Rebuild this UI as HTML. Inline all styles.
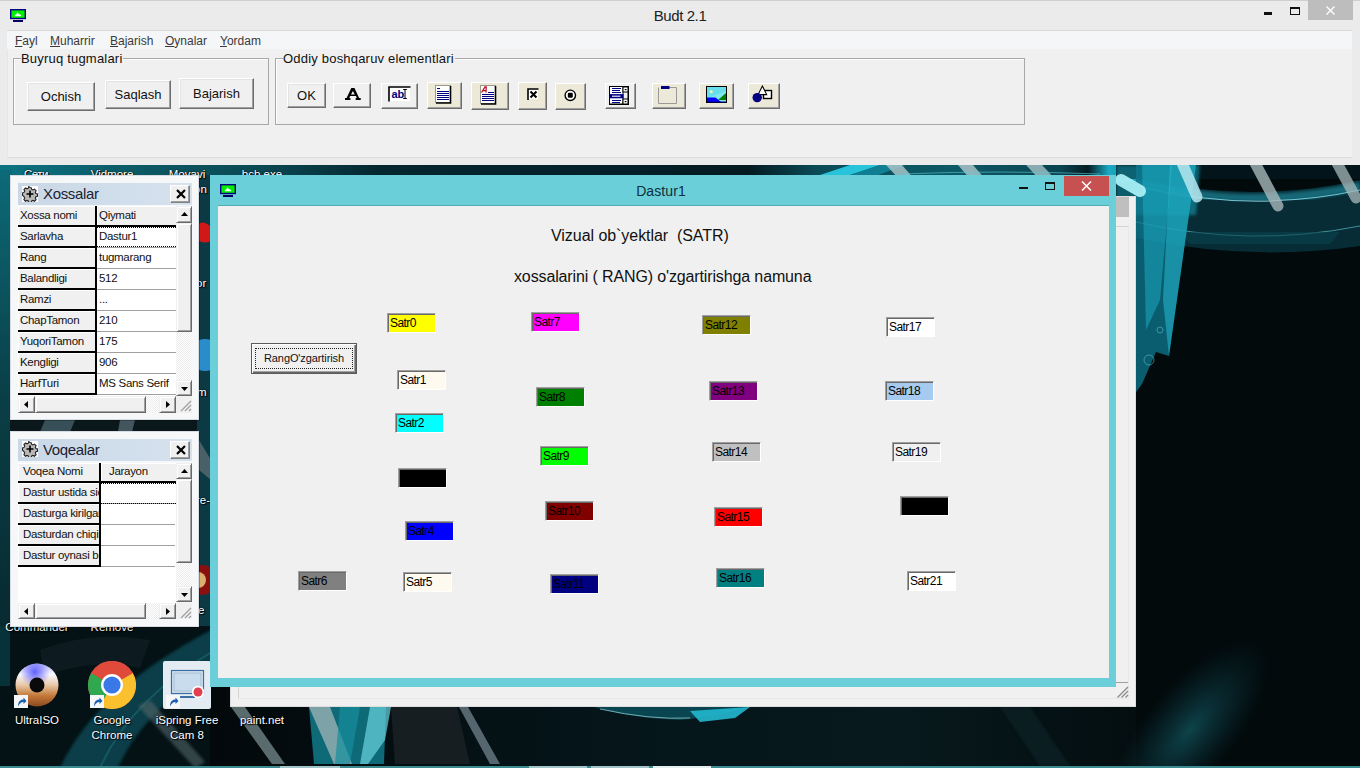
<!DOCTYPE html>
<html><head><meta charset="utf-8">
<style>
*{box-sizing:border-box;margin:0;padding:0}
html,body{width:1360px;height:768px;overflow:hidden}
body{position:relative;background:#03090b;font-family:"Liberation Sans",sans-serif;font-size:12px;color:#000}
.a{position:absolute}
/* desktop */
#deskold{background:
 radial-gradient(ellipse 120px 60px at 1260px 760px,rgba(30,110,120,.35),transparent),
 radial-gradient(ellipse 300px 200px at 520px 740px,rgba(20,90,100,.45),transparent),
 linear-gradient(90deg,#0a3c44 0px,#08323a 10px,#04181c 200px,#03090b 400px,#03090b 100%)}
/* main window */
#main{left:0;top:0;width:1360px;height:165px;background:#ebebeb;box-shadow:inset 0 1px 0 #cfcfcf}
#main .title{left:0;top:1px;width:1360px;height:30px;text-align:center;font-size:15px;line-height:30px;color:#222;letter-spacing:-0.4px}
#menubar{left:7px;top:30px;width:1345px;height:19px;background:#f5f6f7;border-top:1px solid #dadada}
#menubar span{position:absolute;top:3px;font-size:12px;color:#3a3a3a}
#client{left:7px;top:49px;width:1345px;height:109px;background:#f0f0f0;border-bottom:1px solid #dcdcdc;border-left:1px solid #e6e6e6}
.grp{border:1px solid #a8a8a8;box-shadow:1px 1px 0 #fff inset}
.grp .lbl{position:absolute;top:-8px;left:7px;background:#f0f0f0;font-size:13px;line-height:16px;padding-right:1px;color:#111;letter-spacing:0.2px}
.btn{background:#f0f0f0;border:1px solid;border-color:#fff #6d6d6d #6d6d6d #fff;box-shadow:inset -1px -1px 0 #a0a0a0,inset 1px 1px 0 #e3e3e3;text-align:center;font-size:13px;color:#111}
.tb{background:#f0f0f0;border:1px solid;border-color:#fff #6d6d6d #6d6d6d #fff;box-shadow:inset -1px -1px 0 #a0a0a0}
.lab{width:49px;height:20px;border:1px solid;border-color:#a0a0a0 #fff #fff #a0a0a0;box-shadow:inset 1px 1px 0 #696969;font-size:12px;line-height:18px;padding-left:2px;color:#000;letter-spacing:-0.55px}
.pnl{background:#f6f7f9;border:1px solid #d9dde3;box-shadow:1px 1px 0 rgba(0,0,0,.25)}
.ptl{background:linear-gradient(90deg,#c9d7e6,#d6e2ee);font-size:15px;color:#1a2233;letter-spacing:-0.35px}
.xb{background:#f0f0f0;border:1px solid;border-color:#fff #808080 #808080 #fff;box-shadow:inset -1px -1px 0 #a0a0a0}
.hc{background:#f0f0f0;border-right:2px solid #000;border-bottom:2px solid #000;box-shadow:inset 1px 1px 0 #fff;font-size:11.5px;line-height:19px;padding-left:2px;white-space:nowrap;overflow:hidden;color:#111;letter-spacing:-0.3px}
.vc{background:#fff;border-bottom:1px solid #a0a0a0;font-size:11.5px;line-height:19px;padding-left:2px;white-space:nowrap;overflow:hidden;color:#111;letter-spacing:-0.3px}
.sb{background:#f0f0f0;border:1px solid;border-color:#f0f0f0 #696969 #696969 #f0f0f0;box-shadow:inset 1px 1px 0 #fff,inset -1px -1px 0 #a0a0a0}
.trk{background:repeating-conic-gradient(#fff 0 25%,#ececec 0 50%) 0 0/2px 2px}
.dl{position:absolute;color:#fff;font-size:11.5px;line-height:15px;text-align:center;text-shadow:0 0 2px #000,1px 1px 1px #000;white-space:nowrap}
</style></head><body>
<svg id="desk" class="a" style="left:0;top:0" width="1360" height="768" viewBox="0 0 1360 768">
<defs>
 <linearGradient id="gtop" x1="0" y1="0" x2="1" y2="0"><stop offset="0" stop-color="#0c7282"/><stop offset=".1" stop-color="#0b5a66"/><stop offset=".2" stop-color="#0a4650"/><stop offset=".28" stop-color="#04262e"/><stop offset=".45" stop-color="#03202a"/><stop offset=".55" stop-color="#041a20"/><stop offset=".6" stop-color="#0a4a56"/><stop offset=".7" stop-color="#0c5a66"/><stop offset=".78" stop-color="#0a4450"/><stop offset=".8" stop-color="#041c22"/><stop offset=".815" stop-color="#1aa8c0"/><stop offset="1" stop-color="#0a4a56"/></linearGradient>
 <linearGradient id="gleft" x1="0" y1="0" x2="0" y2="1"><stop offset="0" stop-color="#0c6a78"/><stop offset=".5" stop-color="#0a3e46"/><stop offset="1" stop-color="#072a30"/></linearGradient>
 <linearGradient id="grib" x1="0" y1="0" x2="0" y2="1"><stop offset="0" stop-color="#30d8ee"/><stop offset=".5" stop-color="#1ab0c8"/><stop offset="1" stop-color="#0e7e92"/></linearGradient>
 <linearGradient id="gbr" x1="0" y1="0" x2="1" y2="0"><stop offset="0" stop-color="#03090b"/><stop offset=".35" stop-color="#05151a"/><stop offset=".6" stop-color="#07191d"/><stop offset=".8" stop-color="#040e10"/><stop offset="1" stop-color="#020a0c"/></linearGradient>
 <filter id="bl"><feGaussianBlur stdDeviation="1.5"/></filter>
 <filter id="bl6" x="-50%" y="-50%" width="200%" height="200%"><feGaussianBlur stdDeviation="8"/></filter>
 <radialGradient id="rglow"><stop offset="0" stop-color="#0f4a52" stop-opacity=".9"/><stop offset=".5" stop-color="#0c3a42" stop-opacity=".5"/><stop offset="1" stop-color="#0a3038" stop-opacity="0"/></radialGradient>
</defs>
<rect width="1360" height="768" fill="#020a0c"/>
<!-- top strip -->
<rect x="0" y="160" width="1360" height="22" fill="url(#gtop)"/>
<path d="M805 180 L850 165 L880 165 L835 180z" fill="#2ad0e8" opacity=".9"/><path d="M835 180 L880 165 L905 165 L865 180z" fill="#118aa0" opacity=".8"/>
<path d="M886 165 L902 165 L915 180 L900 180z" fill="#a8c4c8" opacity=".85"/>
<path d="M958 165 L973 165 L986 180 L971 180z" fill="#a8c4c8" opacity=".85"/>
<path d="M1026 165 L1042 165 L1056 180 L1040 180z" fill="#a8c4c8" opacity=".8"/>
<path d="M900 174 Q1000 170 1100 174" stroke="#5ec8d8" stroke-width="1" fill="none" opacity=".6"/>
<!-- left edge -->
<rect x="0" y="170" width="12" height="460" fill="url(#gleft)"/>
<!-- gap between panels -->
<rect x="10" y="418" width="190" height="14" fill="#0a181c"/>
<path d="M45 420 L75 420 L70 432 L40 432z" fill="#4a6670" opacity=".7"/><path d="M120 420 L135 420 L132 432 L118 432z" fill="#6a8088" opacity=".6"/>
<!-- strip between panels and Dastur1 -->
<rect x="197" y="175" width="14" height="460" fill="#0b3a44"/>
<path d="M197 225 q6 -6 14 2 l0 14 q-8 4 -14 -2z" fill="#d01818"/>
<circle cx="205" cy="355" r="16" fill="#2b8ccc"/>
<path d="M199 440 L211 460 L211 480 L199 470z" fill="#5a6a70" opacity=".8"/>
<circle cx="202" cy="580" r="15" fill="#8a1010"/><circle cx="198" cy="580" r="8" fill="#d8b070"/>
<!-- bottom-left region -->
<rect x="0" y="626" width="212" height="142" fill="#041215"/>
<rect x="0" y="626" width="10" height="60" fill="#08323a"/>
<path d="M60 768 Q95 690 215 628 L215 665 Q140 715 118 768z" fill="#0b4a54" opacity=".8" filter="url(#bl)"/>
<path d="M100 768 Q130 700 215 650" stroke="#1a6a74" stroke-width="2" fill="none" opacity=".6"/>
<path d="M138 706 L150 700 L205 762 L195 768z" fill="#52666a" opacity=".6" filter="url(#bl)"/>
<path d="M40 650 Q90 630 150 640 L140 668 Q90 658 45 676z" fill="#0e1c20" opacity=".9"/>
<!-- bottom band -->
<rect x="210" y="687" width="1150" height="81" fill="url(#gbr)"/>
<path d="M231 707 L245 707 L285 764 L272 764z" fill="#6a7c80" opacity=".85"/>
<path d="M309 707 L386 707 L384 764 L314 764z" fill="#0e6a76"/>
<path d="M309 707 L330 707 L352 764 L334 764z" fill="#9ab0b4" opacity=".8"/>
<path d="M340 707 L360 707 L350 764 L335 764z" fill="#168e9c" opacity=".7"/>
<path d="M370 707 L391 707 L385 740 L368 764 L360 764z" fill="#6ad4e0" opacity=".7"/>
<path d="M391 707 L457 707 L470 764 L395 764z" fill="#161e22"/>
<path d="M459 707 L468 707 L500 764 L490 764z" fill="#6a7c84" opacity=".8"/>
<path d="M594 707 L750 707 Q720 716 680 720 Q630 718 594 707z" fill="#0a4a56" opacity=".9"/><path d="M600 709 Q650 720 690 718" stroke="#9ad8e0" stroke-width="1" fill="none" opacity=".7"/>
<path d="M690 711 L750 707 L735 718 L700 722z" fill="#22b8d0" opacity=".9"/>
<path d="M1000 707 L1030 707 L1070 766 L1040 766z" fill="#0e2226" opacity=".7" filter="url(#bl)"/>
<!-- right region -->
<rect x="1136" y="165" width="224" height="603" fill="#020a0c"/>
<rect x="1116" y="165" width="244" height="14" fill="#03141a"/>
<path d="M1136 178 Q1250 205 1360 180 L1360 246 Q1250 262 1136 238z" fill="#072e38" opacity=".95"/>
<path d="M1136 182 Q1250 212 1360 186" stroke="#2ab0c8" stroke-width="8" fill="none" opacity=".45" filter="url(#bl)"/>
<path d="M1136 186 Q1250 214 1360 190" stroke="#8ae4f0" stroke-width="1.2" fill="none" opacity=".8"/>
<path d="M1136 222 Q1250 248 1360 226" stroke="#6ad0de" stroke-width="1" fill="none" opacity=".6"/>
<path d="M1190 244 L1330 244 L1340 232 L1180 232z" fill="#0a4450" opacity=".6"/>
<path d="M1116 165 L1200 165 L1196 215 L1116 215z" fill="#14a0b8" opacity=".55" filter="url(#bl)"/>
<path d="M1136 165 L1196 165 L1169 356 L1156 352 L1142 384 L1136 392z" fill="#0e7a90" opacity=".75"/>
<path d="M1142 165 L1172 165 L1160 300 L1146 330z" fill="#20b8d0" opacity=".45"/>
<path d="M1170 165 L1196 165 L1169 356 L1163 300z" fill="#28c4dc" opacity=".5"/>
<circle cx="1149" cy="360" r="5" fill="none" stroke="#5ab8c8" opacity=".6"/>
<circle cx="1160" cy="330" r="3" fill="none" stroke="#5ab8c8" opacity=".6"/>
<path d="M1182 163 L1197 197" stroke="#b8e8ee" stroke-width="11" stroke-linecap="round" fill="none" opacity=".85"/>
<path d="M1255 163 L1278 206" stroke="#a8b8ba" stroke-width="11" stroke-linecap="round" fill="none" opacity=".8"/>
<path d="M1337 163 L1356 198" stroke="#a8b8ba" stroke-width="11" stroke-linecap="round" fill="none" opacity=".75"/>
<path d="M1121 180 L1140 191" stroke="#a8eef4" stroke-width="12" stroke-linecap="round" fill="none" opacity=".95"/>
<ellipse cx="1190" cy="730" rx="45" ry="110" transform="rotate(40 1190 730)" fill="url(#rglow)"/>
<!-- taskbar edge -->
<rect x="0" y="766" width="1360" height="2" fill="#3a8a90"/>
<rect x="280" y="766" width="60" height="2" fill="#a0c4c8"/>
<rect x="529" y="766" width="58" height="2" fill="#a0c4c8"/>
<rect x="591" y="766" width="58" height="2" fill="#a0c4c8"/>
<rect x="653" y="766" width="58" height="2" fill="#e4eeee"/>
</svg>


<!-- desktop icons -->
<svg class="a" style="left:15px;top:663px" width="44" height="44" viewBox="0 0 44 44">
 <defs><linearGradient id="udisc" x1="0" y1="0" x2="0" y2="1"><stop offset="0" stop-color="#b8b8f8"/><stop offset=".25" stop-color="#f8f8ff"/><stop offset=".5" stop-color="#e8c8a8"/><stop offset=".75" stop-color="#c47838"/><stop offset="1" stop-color="#8a4a20"/></linearGradient>
 <radialGradient id="uglow" cx=".45" cy=".2" r=".35"><stop offset="0" stop-color="#6060ff"/><stop offset="1" stop-color="#6060ff" stop-opacity="0"/></radialGradient></defs>
 <circle cx="22" cy="22" r="21.5" fill="url(#udisc)"/><circle cx="22" cy="22" r="21.5" fill="url(#uglow)"/><circle cx="22" cy="22" r="7.5" fill="#0a0a0a"/>
</svg>
<svg class="a" style="left:14px;top:695px" width="14" height="13" viewBox="0 0 14 13"><rect width="14" height="13" fill="#f4f6f8"/><path d="M4 11.5C4 7 6 4.5 9.5 4.5V2.5L12.5 6 9.5 9V7C7 7 5.5 8.5 4 11.5z" fill="#1d5fb0"/></svg>
<svg class="a" style="left:88px;top:661px" width="48" height="48" viewBox="0 0 48 48">
 <circle cx="24" cy="24" r="24" fill="#e04a3a"/>
 <path d="M24 24L3.2 12A24 24 0 0 0 12 44.8z" fill="#2fa84f"/>
 <path d="M24 24L44.8 12A24 24 0 0 1 12 44.8z" fill="#fbc02d"/>
 <path d="M24 24L3.2 12A24 24 0 0 1 44.8 12z" fill="#e04a3a"/>
 <circle cx="24" cy="24" r="11" fill="#fff"/><circle cx="24" cy="24" r="8.6" fill="#3b78e7"/>
</svg>
<svg class="a" style="left:90px;top:695px" width="14" height="13" viewBox="0 0 14 13"><rect width="14" height="13" fill="#f4f6f8"/><path d="M4 11.5C4 7 6 4.5 9.5 4.5V2.5L12.5 6 9.5 9V7C7 7 5.5 8.5 4 11.5z" fill="#1d5fb0"/></svg>
<div class="a" style="left:163px;top:661px;width:48px;height:48px;background:#e3ebf3;border-radius:2px"></div>
<svg class="a" style="left:163px;top:661px" width="48" height="48" viewBox="0 0 48 48">
 <rect x="8.5" y="9.5" width="32" height="23" fill="#d4e2ef" stroke="#3a6ea5" stroke-width="1.2"/><rect x="11" y="12" width="27" height="18" fill="#c8dcee" stroke="#8ab" stroke-width=".6"/>
 <path d="M14 36h18" stroke="#3a6ea5" stroke-width="2"/><circle cx="35" cy="31" r="6.2" fill="#fff"/><circle cx="35" cy="31" r="4.5" fill="#e04050"/>
</svg>
<svg class="a" style="left:166px;top:695px" width="14" height="13" viewBox="0 0 14 13"><rect width="14" height="13" fill="#f4f6f8"/><path d="M4 11.5C4 7 6 4.5 9.5 4.5V2.5L12.5 6 9.5 9V7C7 7 5.5 8.5 4 11.5z" fill="#1d5fb0"/></svg>
<div class="dl" style="left:0px;top:620px;width:74px">Commander</div>
<div class="dl" style="left:74px;top:620px;width:76px">Remove</div>
<div class="dl" style="left:0px;top:713px;width:74px">UltraISO</div>
<div class="dl" style="left:74px;top:713px;width:76px">Google<br>Chrome</div>
<div class="dl" style="left:148px;top:713px;width:78px">iSpring Free<br>Cam 8</div>
<div class="dl" style="left:224px;top:713px;width:76px">paint.net</div>
<div class="dl" style="left:1px;top:167px;width:70px;letter-spacing:-0.5px">Сети</div>
<div class="dl" style="left:74px;top:167px;width:76px">Vidmore</div>
<div class="dl" style="left:148px;top:167px;width:78px">Movavi</div>
<div class="dl" style="left:224px;top:167px;width:76px">bcb.exe</div>
<div class="dl" style="left:194px;top:182px;width:20px;text-align:left">on</div>
<div class="dl" style="left:196px;top:276px;width:20px;text-align:left">or</div>
<div class="dl" style="left:197px;top:385px;width:20px;text-align:left">m</div>
<div class="dl" style="left:196px;top:493px;width:20px;text-align:left">re-</div>
<div class="dl" style="left:198px;top:603px;width:20px;text-align:left">e</div>

<!-- main window -->
<div id="main" class="a">
  <div class="a" style="left:10px;top:9px;width:16px;height:13px"><svg width="16" height="13" viewBox="0 0 16 13"><rect x="0.7" y="0.7" width="14.6" height="8.8" fill="#00ee00" stroke="#000080" stroke-width="1.4"/><path d="M4.8 7.3V6.3l1.4-1 1.3-2 1.3 1.8 1 .2 1.4 1v1z" fill="#efffef"/><rect x="3" y="11" width="10" height="2" fill="#000060"/></svg></div>
  <div class="title a">Budt 2.1</div>
  <div class="a" style="left:1264px;top:12px;width:8px;height:3px;background:#111"></div>
  <div class="a" style="left:1290px;top:7px;width:10px;height:8px;border:1px solid #111;border-top-width:2px"></div>
  <div class="a" style="left:1308px;top:0px;width:45px;height:20px;background:#bdbdbd"><svg class="a" style="left:18px;top:6px" width="9" height="9" viewBox="0 0 9 9"><path d="M.5.5l8 8M8.5.5l-8 8" stroke="#fff" stroke-width="1.4"/></svg></div>
  <div id="menubar" class="a">
    <span style="left:8px"><u>F</u>ayl</span>
    <span style="left:43px"><u>M</u>uharrir</span>
    <span style="left:103px"><u>B</u>ajarish</span>
    <span style="left:158px"><u>O</u>ynalar</span>
    <span style="left:213px"><u>Y</u>ordam</span>
  </div>
  <div id="client" class="a"></div>
  <div class="grp a" style="left:13px;top:58px;width:256px;height:67px"><div class="lbl">Buyruq tugmalari</div></div>
  <div class="btn a" style="left:27px;top:82px;width:68px;height:29px;line-height:27px">Ochish</div>
  <div class="btn a" style="left:105px;top:80px;width:66px;height:29px;line-height:27px">Saqlash</div>
  <div class="btn a" style="left:179px;top:78px;width:75px;height:31px;line-height:29px">Bajarish</div>
  <div class="grp a" style="left:275px;top:58px;width:750px;height:67px"><div class="lbl">Oddiy boshqaruv elementlari</div></div>

  <div class="btn a" style="left:287px;top:83px;width:39px;height:25px;line-height:23px;font-size:13px;color:#111">OK</div>
  <div class="tb a" style="left:333px;top:83px;width:38px;height:25px"></div>
  <svg class="a" style="left:345px;top:88px" width="16" height="12" viewBox="0 0 16 12"><path d="M6.3 0h3.2l4.6 10h1.6v2h-5v-2h1.1l-.8-1.9H5.1l-.8 1.9h1.1v2H0v-2h1.6zM7.9 3L6 6.4h3.7z" fill="#000"/></svg>
  <div class="tb a" style="left:381px;top:83px;width:37px;height:26px"></div>
  <svg class="a" style="left:388px;top:86px" width="23" height="16" viewBox="0 0 23 16"><rect x="1" y="1" width="21" height="14" fill="#fff"/><path d="M1 15.5V1H22.5" stroke="#000" stroke-width="1.6" fill="none"/><text x="3.6" y="11.8" font-family="Liberation Sans" font-weight="bold" font-size="11" fill="#000080" letter-spacing="-0.3">ab</text><path d="M15.2 3.5h3.6M17 3.5v9M15.2 12.5h3.6" stroke="#000" stroke-width="1" fill="none"/></svg>
  <div class="tb a" style="left:427px;top:82px;width:35px;height:27px;background:#ece9d8"></div>
  <svg class="a" style="left:435px;top:85px" width="17" height="19" viewBox="0 0 17 19"><rect x="0.5" y="0.5" width="15" height="17" fill="#fff" stroke="#9a9a8a"/><path d="M15.5 1v17H1" stroke="#000" stroke-width="1.6" fill="none"/><path d="M2 3.5h3M2 6.5h12M2 8.5h12M2 10.5h12M2 12.5h12M2 14.5h12" stroke="#000080" stroke-width="1.1"/></svg>
  <div class="tb a" style="left:471px;top:82px;width:38px;height:28px;background:#ece9d8"></div>
  <svg class="a" style="left:480px;top:85px" width="17" height="20" viewBox="0 0 17 20"><rect x="0.5" y="0.5" width="15" height="18" fill="#fff" stroke="#9a9a8a"/><path d="M15.5 1v18H1" stroke="#000" stroke-width="1.6" fill="none"/><path d="M1.5 7.5L5 2h1.2l-.2 5.5M2.8 5.6h3.4" stroke="#c01020" stroke-width="1.3" fill="none"/><path d="M8 7.5h6M2 9.5h12M2 11.5h12M2 13.5h12M2 15.5h12" stroke="#000080" stroke-width="1.1"/></svg>
  <div class="tb a" style="left:518px;top:82px;width:29px;height:28px;background:#ece9d8"></div>
  <svg class="a" style="left:527px;top:88px" width="12" height="12" viewBox="0 0 12 12"><rect x="1" y="1" width="10" height="10" fill="#fff"/><path d="M1 12V1h10.5" stroke="#000" stroke-width="1.6" fill="none"/><path d="M3.5 3.5l6 6M9.5 3.5l-6 6" stroke="#000" stroke-width="2.1"/></svg>
  <div class="tb a" style="left:555px;top:83px;width:31px;height:27px;background:#ece9d8"></div>
  <svg class="a" style="left:564px;top:89px" width="13" height="13" viewBox="0 0 13 13"><circle cx="6.3" cy="6.3" r="5.2" fill="#fff" stroke="#000" stroke-width="1.4"/><rect x="3.8" y="3.8" width="5" height="5" rx="1.2" fill="#000"/></svg>
  <div class="tb a" style="left:605px;top:83px;width:31px;height:26px"></div>
  <svg class="a" style="left:609px;top:86px" width="20" height="19" viewBox="0 0 20 19"><rect x="0.5" y="0.5" width="19" height="18" fill="#fff" stroke="#000"/><path d="M1 18.2H19.5V0.5" stroke="#000" stroke-width="1.4" fill="none"/><rect x="14" y="1" width="5" height="17" fill="#f0f0f0" stroke="#000"/><rect x="14" y="1" width="5" height="5" fill="#fff" stroke="#000"/><rect x="14" y="13" width="5" height="5" fill="#fff" stroke="#000"/><rect x="15.7" y="3" width="1.8" height="1.2" fill="#000"/><rect x="15.7" y="15" width="1.8" height="1.2" fill="#000"/><path d="M3 2.5h9M3 4.5h8M3 6.5h9M3 14.5h9M3 16.5h8" stroke="#000080" stroke-width="1.1"/><path d="M0.5 10.2h14" stroke="#000080" stroke-width="4.2"/><path d="M3 10.2h8.5" stroke="#fff" stroke-width="1.1"/></svg>
  <div class="tb a" style="left:652px;top:83px;width:34px;height:26px;background:#ece9d8"></div>
  <svg class="a" style="left:657px;top:85px" width="21" height="20" viewBox="0 0 21 20"><path d="M12 2.5H19.5V18.5H1.5V2.5" stroke="#9a9a9a" fill="none"/><rect x="4" y="1" width="8.5" height="3" fill="#000080"/></svg>
  <div class="tb a" style="left:699px;top:83px;width:35px;height:26px;background:#ece9d8"></div>
  <svg class="a" style="left:706px;top:86px" width="22" height="18" viewBox="0 0 22 18"><rect x="0" y="0" width="21" height="17" fill="#000"/><rect x="1" y="1" width="19" height="15" fill="#80e8f0"/><path d="M1 1h19v4L1 12z" fill="#50d8e8" opacity=".5"/><path d="M4.5 4l2.5 1.5-1 2-2.5-1.5z" fill="#f8f8c0"/><path d="M12 14L20 7v7z" fill="#008000"/><path d="M1 11.5h8.5l5.5 4.5H1z" fill="#0000ff"/><path d="M1 16h19" stroke="#000080"/></svg>
  <div class="tb a" style="left:748px;top:83px;width:32px;height:26px;background:#ece9d8"></div>
  <svg class="a" style="left:752px;top:85px" width="22" height="21" viewBox="0 0 22 21"><rect x="11.5" y="5.5" width="8" height="8" fill="#fff" stroke="#000" stroke-width="1.4"/><path d="M10.4 1l4.3 8.6H6.1z" fill="#fff" stroke="#000" stroke-width="1.1"/><circle cx="5.2" cy="12.6" r="4.7" fill="#000080"/></svg>
</div>
<!-- behind window -->
<div class="a" style="left:230px;top:196px;width:906px;height:511px;background:#f0f0f0;border:1px solid #dcdcdc">
  <div class="a" style="left:885px;top:0px;width:13px;height:20px;background:#bfbfbf"></div>
  <div class="a" style="left:7px;top:29px;width:891px;height:473px;border:1px solid #d4d4d4;border-right-color:#e8e8e8;border-bottom-color:#e8e8e8"></div>
  <svg class="a" style="left:885px;top:489px" width="13" height="13" viewBox="0 0 13 13"><path d="M12 1L1.5 11.5M12 5L5.5 11.5M12 9L9.5 11.5" stroke="#8a8a8a" stroke-width="1.3"/></svg><div class="a" style="left:885px;top:485px;width:12px;height:1px;background:#a0a0a0"></div>
</div>
<!-- Dastur1 window -->
<div id="dw" class="a" style="left:210px;top:175px;width:906px;height:512px;background:#6acfd9">
  <div class="a" style="left:10px;top:9px;width:16px;height:13px"><svg width="16" height="13" viewBox="0 0 16 13"><rect x="0.7" y="0.7" width="14.6" height="8.8" fill="#00ee00" stroke="#000080" stroke-width="1.4"/><path d="M4.8 7.3V6.3l1.4-1 1.3-2 1.3 1.8 1 .2 1.4 1v1z" fill="#efffef"/><rect x="3" y="11" width="10" height="2" fill="#000060"/></svg></div>
  <div class="a" style="left:-2px;top:1px;width:906px;height:30px;text-align:center;line-height:30px;font-size:14px;color:#10303a;letter-spacing:0.1px">Dastur1</div>
  <div class="a" style="left:809px;top:12px;width:9px;height:2px;background:#111"></div>
  <div class="a" style="left:835px;top:7px;width:10px;height:8px;border:1px solid #111;border-top-width:2px"></div>
  <div class="a" style="left:854px;top:1px;width:45px;height:20px;background:#c75050"><svg class="a" style="left:17px;top:5px" width="11" height="10" viewBox="0 0 11 10"><path d="M1 0.5l9 9M10 0.5l-9 9" stroke="#fff" stroke-width="1.5"/></svg></div>
  <div class="a" style="left:8px;top:30px;width:891px;height:1px;background:#58aab2"></div>
  <div id="form" class="a" style="left:8px;top:31px;width:891px;height:472px;background:#f0f0f0">
    <div class="a" style="left:333px;top:21px;font-size:16px;line-height:18px;color:#111;letter-spacing:-0.05px">Vizual ob`yektlar &nbsp;(SATR)</div>
    <div class="a" style="left:296px;top:62px;font-size:16px;line-height:18px;color:#111;letter-spacing:-0.13px">xossalarini ( RANG) o'zgartirishga namuna</div>
  </div>
</div>
<div class="a" style="left:251px;top:343px;width:106px;height:31px;background:#f0f0f0;border:1px solid #5a5a5a;box-shadow:inset 1px 1px 0 #fff,inset -1px -1px 0 #696969,inset -2px -2px 0 #a0a0a0;font-size:11px;text-align:center;line-height:29px;letter-spacing:-0.1px;color:#111">
  <div class="a" style="left:3px;top:4px;width:98px;height:21px;border:1px dotted #222"></div>RangO'zgartirish</div>
<div class="lab a" style="left:387px;top:313px;background:#ffff00">Satr0</div><div class="lab a" style="left:531px;top:312px;background:#ff00ff">Satr7</div><div class="lab a" style="left:397px;top:370px;background:#fffaf0">Satr1</div><div class="lab a" style="left:536px;top:387px;background:#008000">Satr8</div><div class="lab a" style="left:395px;top:413px;background:#00ffff">Satr2</div><div class="lab a" style="left:540px;top:446px;background:#00ff00">Satr9</div><div class="lab a" style="left:398px;top:468px;background:#000000"></div><div class="lab a" style="left:545px;top:501px;background:#800000">Satr10</div><div class="lab a" style="left:405px;top:521px;background:#0000ff">Satr4</div><div class="lab a" style="left:298px;top:571px;background:#808080">Satr6</div><div class="lab a" style="left:403px;top:572px;background:#fffaf0">Satr5</div><div class="lab a" style="left:550px;top:574px;background:#000080">Satr11</div><div class="lab a" style="left:702px;top:315px;background:#808000">Satr12</div><div class="lab a" style="left:886px;top:317px;background:#ffffff">Satr17</div><div class="lab a" style="left:709px;top:381px;background:#800080">Satr13</div><div class="lab a" style="left:885px;top:381px;background:#a6caf0">Satr18</div><div class="lab a" style="left:712px;top:442px;background:#c0c0c0">Satr14</div><div class="lab a" style="left:892px;top:442px;background:#f0f0f0">Satr19</div><div class="lab a" style="left:714px;top:507px;background:#ff0000">Satr15</div><div class="lab a" style="left:900px;top:496px;background:#000000"></div><div class="lab a" style="left:716px;top:568px;background:#008080">Satr16</div><div class="lab a" style="left:907px;top:571px;background:#ffffff">Satr21</div>

<!-- panels -->
<div class="pnl a" style="left:10px;top:175px;width:189px;height:245px"><div class="ptl a" style="left:7px;top:7px;width:174px;height:22px;line-height:22px;padding-left:25px">Xossalar<svg class="a" style="left:4px;top:3px" width="16" height="16" viewBox="0 0 16 16"><rect width="16" height="16" fill="#fff"/><path d="M8 1.5l1.2.2.5 1.6 1.3.6 1.5-.8 1.6 1.6-.8 1.5.6 1.3 1.6.5v2.3l-1.6.5-.6 1.3.8 1.5-1.6 1.6-1.5-.8-1.3.6-.5 1.6H6.8l-.5-1.6-1.3-.6-1.5.8-1.6-1.6.8-1.5-.6-1.3L.5 9.2V6.9l1.6-.5.6-1.3-.8-1.5 1.6-1.6 1.5.8 1.3-.6.5-1.6z" fill="#b8b8b8" stroke="#222" stroke-width="1.1"/><path d="M8 4.5v7M4.5 8h7" stroke="#000" stroke-width="1.6"/></svg><div class="xb a" style="left:152px;top:2px;width:20px;height:18px"><svg class="a" style="left:5px;top:3px" width="10" height="10" viewBox="0 0 10 10"><path d="M1 1l8 8M9 1l-8 8" stroke="#000" stroke-width="2.2"/></svg></div></div><div class="a" style="left:7px;top:30px;width:158px;height:190px;background:#fff;overflow:hidden"><div class="hc a" style="left:0;top:0;width:79px;height:21px">Xossa nomi</div><div class="hc a" style="left:79px;top:0;width:79px;height:21px;border-right:0">Qiymati</div><div class="hc a" style="left:0;top:21px;width:79px;height:21px">Sarlavha</div><div class="vc a" style="left:79px;top:21px;width:79px;height:21px">Dastur1</div><div class="hc a" style="left:0;top:42px;width:79px;height:21px">Rang</div><div class="vc a" style="left:79px;top:42px;width:79px;height:21px">tugmarang</div><div class="hc a" style="left:0;top:63px;width:79px;height:21px">Balandligi</div><div class="vc a" style="left:79px;top:63px;width:79px;height:21px">512</div><div class="hc a" style="left:0;top:84px;width:79px;height:21px">Ramzi</div><div class="vc a" style="left:79px;top:84px;width:79px;height:21px">...</div><div class="hc a" style="left:0;top:105px;width:79px;height:21px">ChapTamon</div><div class="vc a" style="left:79px;top:105px;width:79px;height:21px">210</div><div class="hc a" style="left:0;top:126px;width:79px;height:21px">YuqoriTamon</div><div class="vc a" style="left:79px;top:126px;width:79px;height:21px">175</div><div class="hc a" style="left:0;top:147px;width:79px;height:21px">Kengligi</div><div class="vc a" style="left:79px;top:147px;width:79px;height:21px">906</div><div class="hc a" style="left:0;top:168px;width:79px;height:21px">HarfTuri</div><div class="vc a" style="left:79px;top:168px;width:79px;height:21px">MS Sans Serif</div><div class="a" style="left:79px;top:21px;width:79px;height:20px;border:1px dotted #000;border-left:0;border-right:0"></div></div><div class="trk a" style="left:165px;top:30px;width:16px;height:190px"></div><div class="sb a" style="left:165px;top:30px;width:16px;height:17px"><svg class="a" style="left:4px;top:5px" width="7" height="4"><path d="M0 4h7L3.5 0z" fill="#000"/></svg></div><div class="sb a" style="left:165px;top:47px;width:16px;height:109px"></div><div class="sb a" style="left:165px;top:204px;width:16px;height:16px"><svg class="a" style="left:4px;top:6px" width="7" height="4"><path d="M0 0h7L3.5 4z" fill="#000"/></svg></div><div class="trk a" style="left:7px;top:220px;width:174px;height:17px"></div><div class="sb a" style="left:7px;top:220px;width:17px;height:17px"><svg class="a" style="left:5px;top:4px" width="4" height="7"><path d="M4 0v7L0 3.5z" fill="#000"/></svg></div><div class="sb a" style="left:24px;top:220px;width:111px;height:17px"></div><div class="sb a" style="left:148px;top:220px;width:17px;height:17px"><svg class="a" style="left:6px;top:4px" width="4" height="7"><path d="M0 0v7L4 3.5z" fill="#000"/></svg></div><div class="a" style="left:165px;top:220px;width:16px;height:17px;background:#f0f0f0"><svg class="a" style="left:4px;top:4px" width="12" height="12"><path d="M11 1L1 11M11 5L5 11M11 9L9 11" stroke="#a0a0a0" stroke-width="1.3"/></svg></div></div>
<div class="pnl a" style="left:10px;top:431px;width:189px;height:196px"><div class="ptl a" style="left:7px;top:7px;width:174px;height:22px;line-height:21px;padding-left:25px">Voqealar<svg class="a" style="left:4px;top:2px" width="16" height="16" viewBox="0 0 16 16"><rect width="16" height="16" fill="#fff"/><path d="M8 1.5l1.2.2.5 1.6 1.3.6 1.5-.8 1.6 1.6-.8 1.5.6 1.3 1.6.5v2.3l-1.6.5-.6 1.3.8 1.5-1.6 1.6-1.5-.8-1.3.6-.5 1.6H6.8l-.5-1.6-1.3-.6-1.5.8-1.6-1.6.8-1.5-.6-1.3L.5 9.2V6.9l1.6-.5.6-1.3-.8-1.5 1.6-1.6 1.5.8 1.3-.6.5-1.6z" fill="#b8b8b8" stroke="#222" stroke-width="1.1"/><path d="M8 4.5v7M4.5 8h7" stroke="#000" stroke-width="1.6"/></svg><div class="xb a" style="left:152px;top:2px;width:20px;height:18px"><svg class="a" style="left:5px;top:3px" width="10" height="10" viewBox="0 0 10 10"><path d="M1 1l8 8M9 1l-8 8" stroke="#000" stroke-width="2.2"/></svg></div></div><div class="a" style="left:7px;top:31px;width:158px;height:140px;background:#fff;overflow:hidden"><div class="hc a" style="left:0;top:0;width:83px;height:20px;padding-left:5px;line-height:17px">Voqea Nomi</div><div class="hc a" style="left:83px;top:0;width:75px;line-height:17px;height:20px;border-right:0;padding-left:8px">Jarayon</div><div class="hc a" style="left:0;top:20px;width:83px;height:21px;padding-left:5px">Dastur ustida sichqoncha</div><div class="vc a" style="left:83px;top:20px;width:74px;height:21px"></div><div class="hc a" style="left:0;top:41px;width:83px;height:21px;padding-left:5px">Dasturga kirilganda</div><div class="vc a" style="left:83px;top:41px;width:74px;height:21px"></div><div class="hc a" style="left:0;top:62px;width:83px;height:21px;padding-left:5px">Dasturdan chiqilganda</div><div class="vc a" style="left:83px;top:62px;width:74px;height:21px"></div><div class="hc a" style="left:0;top:83px;width:83px;height:21px;padding-left:5px">Dastur oynasi bo'yicha</div><div class="vc a" style="left:83px;top:83px;width:74px;height:21px"></div><div class="a" style="left:83px;top:20px;width:75px;height:21px;border:1px dotted #000;border-left:0;border-right:0"></div></div><div class="trk a" style="left:165px;top:31px;width:16px;height:140px"></div><div class="sb a" style="left:165px;top:31px;width:16px;height:16px"><svg class="a" style="left:4px;top:5px" width="7" height="4"><path d="M0 4h7L3.5 0z" fill="#000"/></svg></div><div class="sb a" style="left:165px;top:47px;width:16px;height:84px"></div><div class="sb a" style="left:165px;top:154px;width:16px;height:16px"><svg class="a" style="left:4px;top:6px" width="7" height="4"><path d="M0 0h7L3.5 4z" fill="#000"/></svg></div><div class="trk a" style="left:7px;top:171px;width:174px;height:16px"></div><div class="sb a" style="left:7px;top:171px;width:17px;height:16px"><svg class="a" style="left:5px;top:4px" width="4" height="7"><path d="M4 0v7L0 3.5z" fill="#000"/></svg></div><div class="sb a" style="left:24px;top:171px;width:111px;height:16px"></div><div class="sb a" style="left:148px;top:171px;width:17px;height:16px"><svg class="a" style="left:6px;top:4px" width="4" height="7"><path d="M0 0v7L4 3.5z" fill="#000"/></svg></div><div class="a" style="left:165px;top:171px;width:16px;height:16px;background:#f0f0f0"><svg class="a" style="left:4px;top:4px" width="12" height="12"><path d="M11 1L1 11M11 5L5 11M11 9L9 11" stroke="#a0a0a0" stroke-width="1.3"/></svg></div></div>
</body></html>
